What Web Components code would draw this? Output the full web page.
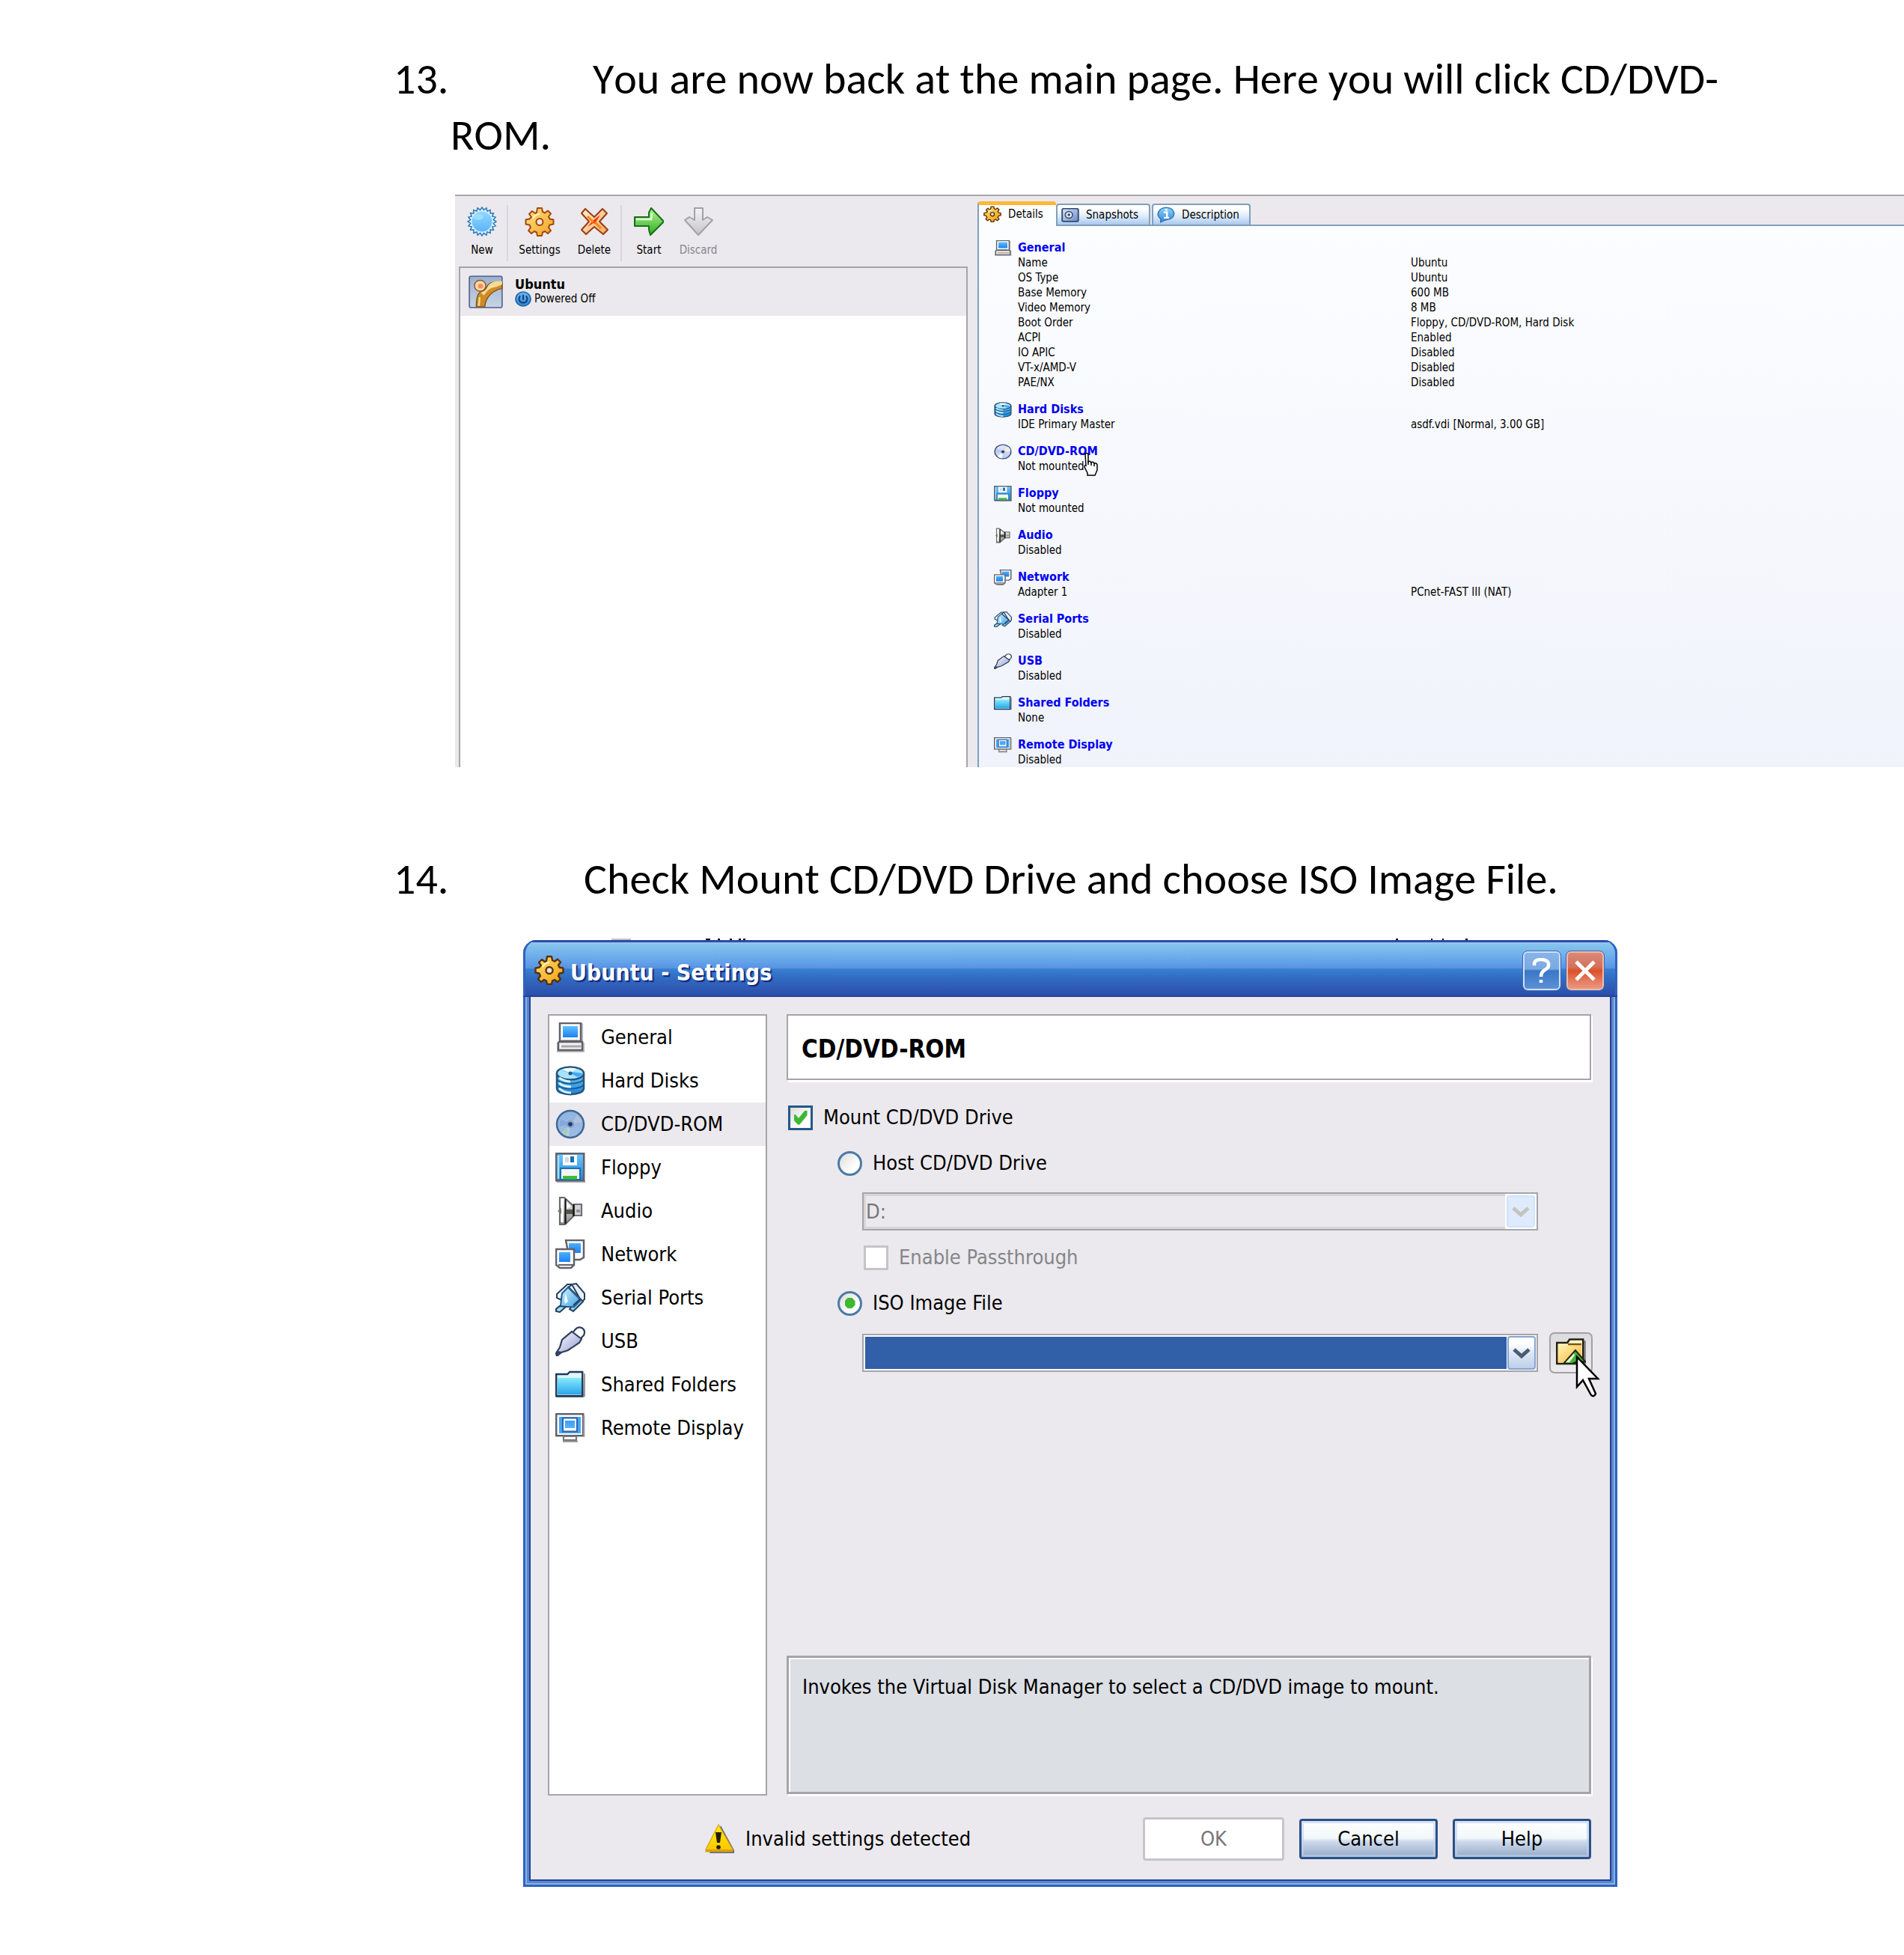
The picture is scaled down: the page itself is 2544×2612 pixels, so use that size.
<!DOCTYPE html>
<html lang="en">
<head>
<meta charset="utf-8">
<title>Installing Ubuntu in VirtualBox</title>
<style>
  body { margin: 0; background: #fff; color: #000; overflow-x: hidden; }
  main { display: flex; flex-direction: column; }
  vm-manager { margin: 42px 0 112px 608px; }
  settings-dialog { margin: 42px 383px 91px 699px; }
</style>
</head>
<body>
<main>
  <doc-step number="13." class="first" style="--lead:266px">You are now back at the main page. Here you will click CD/DVD-<wbr>ROM.</doc-step>
  <vm-manager></vm-manager>
  <doc-step number="14." style="--lead:254px">Check Mount CD/DVD Drive and choose ISO Image File.</doc-step>
  <settings-dialog></settings-dialog>
</main>

<script>
const UI = '"DejaVu Sans Condensed", "DejaVu Sans", sans-serif';

const gear = `
  <g stroke="#5a3010" stroke-width="2.4" stroke-linejoin="round">
   <path fill="url(#gg)" d="M17 2h6l1 5 3 1.500 4-3 4 4-3 4 1.500 3 5 1v6l-5 1-1.500 3.500 3 4-4 4-4-3-3 1.500-1 4.500h-6l-1-4.500-3-1.500-4 3-4-4 3-4-1.500-3.500-5-1v-6l5-1L9 14l-3-4 4-4 4 3 2-1z"/>
   <circle cx="20" cy="20.500" r="4.500" fill="#e9e4e0"/></g>
  <path d="M11 16q3-6 9-6" stroke="#fff2b0" stroke-width="2.500" fill="none"/>`;
const gearGrad = (a, b) => `<defs><linearGradient id="gg" x1="0" y1="0" x2="1" y2="1"><stop offset="0" stop-color="${a}"/><stop offset="1" stop-color="${b}"/></linearGradient></defs>`;
const lin = (id, a, b, dir = 'x2="0" y2="1"') => `<defs><linearGradient id="${id}" x1="0" y1="0" ${dir}><stop offset="0" stop-color="${a}"/><stop offset="1" stop-color="${b}"/></linearGradient></defs>`;
const starPts = (n, r1, r2, cx, cy) => Array.from({ length: n * 2 }, (_, i) => {
  const r = i % 2 ? r2 : r1, a = Math.PI * i / n - Math.PI / 2;
  return (cx + r * Math.cos(a)).toFixed(1) + ',' + (cy + r * Math.sin(a)).toFixed(1);
}).join(' ');

const ICONS = {
  fresh: lin('a', '#8fd8ff', '#5cb4fb') + `<polygon points="${starPts(20, 19, 15.500, 20, 20)}" fill="#d8f3ff" stroke="#2f78b8" stroke-width="1.500"/><circle cx="20" cy="20" r="13.500" fill="url(#a)"/><ellipse cx="15" cy="14" rx="7" ry="4" fill="#a9e2ff" opacity=".7"/>`,
  gear: gearGrad('#ffdf6a', '#f0a010') + gear,
  gearbig: gearGrad('#ffe48a', '#f0a020') + gear.replace('#5a3010', '#a8480c').replace('2.4', '2'),
  remove: lin('a', '#fff0d8', '#f7a860', 'x2="1" y2="1"') + `<path d="M8 3l12 11L31 3l6 6-10 11 11 11-6 6-12-10L9 37l-6-6 10-11L3 9z" fill="url(#a)" stroke="#9c3c10" stroke-width="2" stroke-linejoin="round"/><path d="M18 19l10-8-6 10 5 6-8-5-8 5z" fill="#f5330c"/><path d="M11 13l8 8M21 21l8 8" stroke="#f5880c" stroke-width="3"/>`,
  start: lin('a', '#b8f59a', '#2cae1c') + `<path d="M1 14h19V8l3-6 17 18-18 18-2-7v-5H1z" fill="url(#a)" stroke="#177017" stroke-width="2" stroke-linejoin="round"/><path d="M3 17h20l1-8" stroke="#e4ffd8" stroke-width="2.500" fill="none"/>`,
  discard: lin('a', '#f4f4f6', '#c4c4c8') + `<path d="M15 2h11v16l6-4 7 4-19 20L2 18l6-4 7 4z" fill="url(#a)" stroke="#a2a2a6" stroke-width="2" stroke-linejoin="round"/>`,
  general: lin('a', '#5cc0ff', '#1f80f5') + `<path d="M7 1h30v26h2v13H2V27h5z" fill="#b9b9bd"/><rect x="6" y="1" width="28" height="24" fill="#fff" stroke="#616168" stroke-width="2.500"/><rect x="10" y="5" width="20" height="15" fill="url(#a)"/><path d="M5 26h31v11H4V27z" fill="#f2f2f2" stroke="#616168" stroke-width="2.500"/><path d="M8 32h26" stroke="#a9a9ad" stroke-width="3"/><path d="M10 25h20" stroke="#616168" stroke-width="2.500"/>`,
  disks: lin('a', '#6ccffc', '#1a80d8') + `<path d="M2 10v20c0 11 36 11 36 0V10" fill="url(#a)" stroke="#2a5378" stroke-width="2.500"/><ellipse cx="20" cy="10" rx="18" ry="8.500" fill="#a8e4ff" stroke="#2a5378" stroke-width="2.500"/><path d="M8 6l12 4 10 5q6-2 6-5z" fill="#3fa8ff"/><path d="M9 5l11 5 8-6q-10-3-19 1z" fill="#e9faff"/><path d="M2 17c2 9 34 9 36 0M2 24c2 9 34 9 36 0" fill="none" stroke="#1d5c92" stroke-width="2"/><path d="M5 23q6 5 16 5M5 30q6 6 16 6M5 16q8 5 15 5" fill="none" stroke="#d4f4ff" stroke-width="3"/><circle cx="20" cy="10" r="2.500" fill="#2a5378"/>`,
  cd: lin('a', '#8fb4e0', '#9fbbe2') + `<circle cx="20" cy="20" r="18" fill="url(#a)" stroke="#3d6796" stroke-width="2.500"/><path d="M20 20L29 8q6 4 7 9z" fill="#b4bfdc"/><path d="M20 20L9 31q5 5 9 5z" fill="#b4cbe6"/><path d="M12 29l4-3 0 5-4 3z" fill="#93dc80"/><path d="M20 20L8 13q-3 5-3 10z" fill="#84a9da"/><circle cx="20" cy="20" r="5" fill="#7f9fc8"/><circle cx="20" cy="20" r="2.800" fill="#1e3e68"/>`,
  cdlight: lin('a', '#e2e9fb', '#bccbf0') + `<circle cx="20" cy="20" r="18" fill="url(#a)" stroke="#3c5378" stroke-width="2.500"/><path d="M20 20L31 7q6 5 6 11z" fill="#f4f0dc"/><path d="M20 20L8 32q5 5 10 5z" fill="#f8fafc"/><path d="M20 20L7 12q-4 6-3 12z" fill="#b9c9ee"/><circle cx="20" cy="20" r="5" fill="#a2b4dc"/><circle cx="20" cy="20" r="3" fill="#1c2c48"/>`,
  floppy: lin('a', '#6ec6fb', '#1e86d8') + `<path d="M0 37h40v3H2z" fill="#a9a9ad"/><rect x="1.200" y="1.200" width="37" height="36" fill="url(#a)" stroke="#616168" stroke-width="2.500"/><path d="M4 4v31" stroke="#9be0ff" stroke-width="2.500"/><rect x="10" y="3" width="19" height="14" fill="#fff"/><rect x="20" y="5" width="5" height="8" fill="#1870b0"/><rect x="13" y="6" width="5" height="7" fill="#d9d9dd"/><rect x="7" y="21" width="26" height="15" fill="#f4f4f2" stroke="#1870b0" stroke-width="2"/><rect x="10" y="31" width="19" height="4.500" fill="#3dbe32"/>`,
  audio: lin('a', '#f0f0f0', '#8a8a8a') + `<path d="M6 2h6l12 11v14L13 38H6z" fill="url(#a)" stroke="#6a6a6a" stroke-width="2.200"/><path d="M9 4v31" stroke="#fff" stroke-width="3.500"/><path d="M15 8l6 6-6 3z" fill="#fff"/><path d="M15 18h9v6h-9z" fill="#55524a"/><path d="M3 20l5-4v8z" fill="#77746c"/><path d="M25 11h10v15H25z" fill="#d4d4d6" stroke="#707074" stroke-width="2.200"/><path d="M28 18h5v4h-5z" fill="#94949a"/><path d="M13.500 4v33M24.500 11v16" stroke="#111" stroke-width="2.200"/>`,
  network: lin('a', '#48b0fb', '#1f80f5') + `<path d="M14 1h24v23l-5 3h-14z" fill="#fff" stroke="#616168" stroke-width="2.500"/><rect x="18" y="5" width="16" height="13" fill="url(#a)"/><path d="M1 13h24v21l-4 4H6l-5-4z" fill="#fff" stroke="#616168" stroke-width="2.500"/><rect x="5" y="17" width="15" height="13" fill="url(#a)"/><path d="M4 34h20M8 38h12" stroke="#616168" stroke-width="2"/>`,
  serial: lin('a', '#e4faff', '#2c98e4', 'x2="1" y2="1"') + `<path d="M16 2h6l-12 12-2 9-6-3v-5z" fill="#eef4fa" stroke="#24415e" stroke-width="2"/><path d="M22 2l6-1 11 13v8l-4 3z" fill="#e8eef4" stroke="#24415e" stroke-width="2"/><path d="M17 5l20 20-13 13-5-3 6-7z" fill="#8cd0f8" stroke="#24415e" stroke-width="2"/><path d="M17 6l17 17-9 9-13 0-8 6-3-3 6-5 2-16z" fill="url(#a)" stroke="#2a5c8c" stroke-width="2"/><path d="M1 35l5-4 8 1-8 7-5-1z" fill="#a4dcf8" stroke="#24415e" stroke-width="2"/><path d="M24 30l10-9" stroke="#24415e" stroke-width="2"/><path d="M14 14q-3 8-1 14l4-3z" fill="#f4fdff"/>`,
  usb: lin('a', '#fff', '#8c94d0', 'x2="1" y2="1"') + `<path d="M26 5q4-5 9-3 6 3 3 10l-5 5-10-8z" fill="#fff" stroke="#30405c" stroke-width="2.200"/><path d="M22 7l13 10-3 5-15 10-9 3-6 5-1-4 5-8 3-10z" fill="url(#a)" stroke="#30405c" stroke-width="2.200"/><path d="M1 39l2-6 6 1z" fill="#30405c"/>`,
  folder: lin('a', '#8cecff', '#2aa6e8') + `<path d="M38 4l2 2v30l-3 1z" fill="#9a9aa2"/><path d="M1.200 6h15l3-3h17v32H1.200z" fill="#e6f4ff" stroke="#1c3c58" stroke-width="2.400"/><path d="M3 10h32v23H3z" fill="url(#a)"/><path d="M3 10h32" stroke="#d4f8ff" stroke-width="2"/><path d="M1 35.500h36" stroke="#1c3c58" stroke-width="2.500"/>`,
  display: lin('a', '#3c9cf8', '#58b4ff') + `<rect x="1.200" y="1.200" width="36" height="29" fill="#fff" stroke="#616168" stroke-width="2.500"/><rect x="5" y="5" width="29" height="22" fill="#44a8fa"/><rect x="10" y="6.500" width="19" height="18" fill="#fff" stroke="#2c64a8" stroke-width="2"/><rect x="13" y="10" width="13" height="10" fill="url(#a)"/><path d="M11 31h17v5H11z" fill="#fff" stroke="#77777d" stroke-width="2.200"/><path d="M10 38h20" stroke="#9a9aa0" stroke-width="2"/><path d="M38.500 3v29" stroke="#a9a9ad" stroke-width="2"/>`,
  snapshot: lin('a', '#dce8fb', '#6c88c4', 'x2="1" y2="1"') + `<rect x="2" y="5" width="36" height="31" rx="3" fill="url(#a)" stroke="#30486c" stroke-width="3"/><circle cx="17" cy="20" r="8" fill="#eef3fc" stroke="#40587c" stroke-width="3"/><circle cx="17" cy="20" r="3" fill="#30486c"/>`,
  info: lin('a', '#8ed4fb', '#2c84dc') + `<path d="M8 38v-8Q1 24 2 17 5 3 20 2q16 1 18 14 0 14-16 16l-6 2z" fill="url(#a)" stroke="#3878b0" stroke-width="2.500"/><path d="M15 14h7v12M15 27h12M18 8h5" stroke="#fff" stroke-width="4" fill="none"/>`,
  power: lin('a', '#6cbcf4', '#2c80cc') + `<circle cx="20" cy="20" r="18" fill="url(#a)" stroke="#2464a4" stroke-width="3"/><path d="M13 12q-6 8 0 15 7 5 14 0 6-7 0-15M20 9v13" stroke="#0c3c7c" stroke-width="3.500" fill="none"/>`,
  vm: lin('a', '#9cb0cc', '#c8d4e4') + `<rect x="1" y="1" width="38" height="38" rx="2" fill="url(#a)" stroke="#606c98" stroke-width="1.600"/><path d="M39 8c-7-1-15 0-18 6-1 3-3 4-7 6-4 2-5 10-5 18h10c0-7 4-14 10-18 3-2 6-4 10-4z" fill="#d08c20" stroke="#7c5024" stroke-width="1.200"/><path d="M39 7c-8-1-14 1-17 7-1 3-3 5-8 7l4 3q5-8 10-9 6-1 11-4z" fill="#f4dc98"/><path d="M12 26l-1 11h2l1-10z" fill="#f4dc98"/><circle cx="13.500" cy="12.500" r="6.600" fill="#f8d8a0" stroke="#8c5c34" stroke-width="1.300"/><circle cx="14" cy="13" r="3" fill="#f49060"/>`,
  warn: lin('a', '#fff000', '#ffc400') + `<path d="M21 2l18 33v4H6z" fill="#5c6880"/><path d="M18 1L1 34v3h36v-3z" fill="url(#a)" stroke="#d89c20" stroke-width="1.200"/><path d="M1 35.500h36" stroke="#d4a018" stroke-width="3"/><path d="M14 11h8l-2 14h-4z" fill="#201c08"/><circle cx="18" cy="31" r="2.800" fill="#201c08"/>`,
  open: lin('a', '#fff4b0', '#f8b840', 'x2="1" y2="1"') + `<path d="M36 3h4v33h-4z" fill="#8c8c90"/><path d="M1.200 6h14l3-4.500h18V34H1.200z" fill="#fff8d0" stroke="#2a2010" stroke-width="2.500"/><path d="M3 9h31v23H3z" fill="url(#a)"/><path d="M16 8h18" stroke="#7c5810" stroke-width="2.500"/><path d="M26 16L10 34h12l8-4 10 2z" fill="#3cb83c" stroke="#2a2010" stroke-width="2"/><path d="M24 20L13 32h5l7-9z" fill="#e8f8d8"/>`
};

class BaseElement extends HTMLElement {
  constructor() {
    super();
    this.attachShadow({ mode: 'open' });
  }
  connectedCallback() {
    if (!this.shadowRoot.firstChild) this.shadowRoot.innerHTML = this.render();
  }
  get(name, fallback = '') { return this.getAttribute(name) ?? fallback; }
}

customElements.define('vm-icon', class extends BaseElement {
  render() {
    return `<style>:host{display:block;flex:none;width:40px;height:40px}svg{display:block;width:100%;height:100%}</style>
    <svg viewBox="0 0 40 40" preserveAspectRatio="none" aria-hidden="true">${ICONS[this.get('name')]}</svg>`;
  }
});

customElements.define('doc-step', class extends BaseElement {
  render() {
    return `<style>
      :host{display:block;padding:0 200px 0 602px;font:58px/75px Carlito, Lato, sans-serif;font-kerning:none;font-variant-ligatures:none}
      :host(.first){padding-top:68px}
      p{margin:0;text-indent:-76px}
      .n{display:inline-block;width:var(--lead);text-indent:0}
    </style><p><span class="n">${this.get('number')}</span><slot></slot></p>`;
  }
});

customElements.define('tool-button', class extends BaseElement {
  render() {
    return `<style>
      :host{display:block;flex:none}
      button{all:unset;box-sizing:border-box;display:flex;flex-direction:column;align-items:center;gap:8px;width:100%;font:15px/20px ${UI};white-space:nowrap}
      :host([disabled]) button{color:#85858a}
    </style><button ${this.hasAttribute('disabled') ? 'disabled' : ''}><vm-icon name="${this.get('icon')}"></vm-icon><slot></slot></button>`;
  }
});

customElements.define('vm-tab', class extends BaseElement {
  render() {
    return `<style>
      :host{display:block}
      button{all:unset;box-sizing:border-box;display:flex;align-items:center;gap:9px;height:28px;width:100%;padding:0 0 1px 5px;
        border:2px solid #7f9fbf;border-bottom:0;border-radius:4px 4px 0 0;
        background:linear-gradient(#fff 20%,#dce9f9 60%,#a9c9ef);font:15px/20px ${UI};white-space:nowrap}
      :host([selected]) button{height:33px;padding:0 0 5px 6px;border-top:5px solid #fdb834;border-right-width:0;background:#fcfdff}
      vm-icon{width:24px;height:22px}
    </style><button role="tab"><vm-icon name="${this.get('icon')}"></vm-icon><slot></slot></button>`;
  }
});

customElements.define('detail-section', class extends BaseElement {
  render() {
    const rows = this.get('rows').split('|').map(r => r.split('='));
    return `<style>
      :host{display:grid;grid-template-columns:32px 1fr;font:15px/20px ${UI}}
      vm-icon{width:24px;height:21px}
      h3{margin:0;font:bold 16px/20px ${UI}}
      h3 a{position:relative;color:#0000f0;text-decoration:none}
      table{border-collapse:collapse;width:100%;table-layout:fixed}
      th,td{padding:0;height:20px;text-align:left;font-weight:400;white-space:nowrap}
      th{width:525px}
      ::slotted(svg){position:absolute;left:87px;top:11px}
    </style>
    <vm-icon name="${this.get('icon')}"></vm-icon>
    <div><h3><a href="#">${this.get('title')}<slot></slot></a></h3>
    <table>${rows.map(([k, v]) => `<tr><th scope="row">${k}</th><td>${v || ''}</td></tr>`).join('')}</table></div>`;
  }
});

customElements.define('vm-manager', class extends BaseElement {
  render() {
    return `<style>
      :host{display:grid;grid-template-columns:698px minmax(0,1fr);height:765px;overflow:hidden;background:#ebe9ed;
        border-top:2px solid #a7a6aa;box-sizing:border-box;font:15px/20px ${UI}}
      .left{display:flex;flex-direction:column;padding:12px 13px 0 5px}
      .bar{display:flex;height:82px}
      .bar i{flex:none;width:2px;height:75px;margin:0 2px;background:#d8d6da}
      .bar tool-button{margin-top:2px}
      .w62{width:62px}.w80{width:80px}.w66{width:66px}.w68{width:68px}.w64{width:64px}
      ul{flex:1;margin:0;padding:0;list-style:none;background:#fff;border:2px solid #a5a5a9;border-bottom:0}
      li{display:flex;align-items:center;gap:16px;height:64px;padding-left:11px;background:#ebe9ed}
      li>vm-icon{width:46px;height:44px}
      b{display:block;font:bold 18px/18px ${UI}}
      .st{display:flex;align-items:center;gap:4px;height:20px}
      .st vm-icon{width:22px;height:21px}
      .right{display:flex;flex-direction:column;padding-top:7px}
      .tabs{display:flex;align-items:flex-end;height:31px;z-index:1}
      .t1{width:105px;margin-bottom:-2px}.t2{width:126px;margin-right:2px}.t3{width:132px}
      .page{flex:1;border:solid #7f9fbf;border-width:2px 0 0 2px;background:linear-gradient(#fcfdff,#f8f9fe 40%,#f0f3fb);padding:19px 0 0 20px;display:flex;flex-direction:column;gap:16px}
    </style>
    <div class="left">
      <div class="bar" role="toolbar">
        <tool-button class="w62" icon="fresh">New</tool-button><i></i>
        <tool-button class="w80" icon="gearbig">Settings</tool-button>
        <tool-button class="w66" icon="remove">Delete</tool-button><i></i>
        <tool-button class="w68" icon="start">Start</tool-button>
        <tool-button class="w64" icon="discard" disabled>Discard</tool-button>
      </div>
      <ul><li><vm-icon name="vm"></vm-icon><div><b>Ubuntu</b><span class="st"><vm-icon name="power"></vm-icon>Powered Off</span></div></li></ul>
    </div>
    <div class="right">
      <div class="tabs" role="tablist">
        <vm-tab class="t1" icon="gear" selected>Details</vm-tab>
        <vm-tab class="t2" icon="snapshot">Snapshots</vm-tab>
        <vm-tab class="t3" icon="info">Description</vm-tab>
      </div>
      <div class="page">
        <detail-section icon="general" title="General" rows="Name=Ubuntu|OS Type=Ubuntu|Base Memory=600 MB|Video Memory=8 MB|Boot Order=Floppy, CD/DVD-ROM, Hard Disk|ACPI=Enabled|IO APIC=Disabled|VT-x/AMD-V=Disabled|PAE/NX=Disabled"></detail-section>
        <detail-section icon="disks" title="Hard Disks" rows="IDE Primary Master=asdf.vdi [Normal, 3.00 GB]"></detail-section>
        <detail-section icon="cdlight" title="CD/DVD-ROM" rows="Not mounted"><svg width="22" height="32" viewBox="0 0 22 32"><path d="M3 3q2-3 4 0v10q2-2 4 1 2-2 4 1 3-1 4 2v7l-3 7H6v-3L2 20q0-3 2-2z" fill="#fff" stroke="#000" stroke-width="1.500"/><path d="M7 12v5M11 13v5M15 15v4" stroke="#000" stroke-width="1.500"/></svg></detail-section>
        <detail-section icon="floppy" title="Floppy" rows="Not mounted"></detail-section>
        <detail-section icon="audio" title="Audio" rows="Disabled"></detail-section>
        <detail-section icon="network" title="Network" rows="Adapter 1=PCnet-FAST III (NAT)"></detail-section>
        <detail-section icon="serial" title="Serial Ports" rows="Disabled"></detail-section>
        <detail-section icon="usb" title="USB" rows="Disabled"></detail-section>
        <detail-section icon="folder" title="Shared Folders" rows="None"></detail-section>
        <detail-section icon="display" title="Remote Display" rows="Disabled"></detail-section>
      </div>
    </div>`;
  }
});

customElements.define('nav-item', class extends BaseElement {
  render() {
    return `<style>
      :host{display:block}
      a{display:flex;align-items:center;gap:21px;height:58px;padding-left:8px;color:#000;text-decoration:none;white-space:nowrap}
      :host([selected]) a{background:#ebe9ed}
    </style><a href="#"><vm-icon name="${this.get('icon')}"></vm-icon><slot></slot></a>`;
  }
});

customElements.define('combo-box', class extends BaseElement {
  render() {
    const off = this.hasAttribute('disabled');
    return `<style>
      :host{display:flex;box-sizing:border-box;height:51px;border:2px solid #a5a5a9;background:#fff}
      select{appearance:none;flex:1;min-width:0;margin:2px 0 2px 2px;padding:0 2px;border:0;border-radius:0;background:#315fa8;color:#fff;font:27px/32px ${UI};opacity:1}
      :host([disabled]) select{margin:0;border:solid #d6d5da;border-width:3px 0 3px 3px;padding:0;background:#ebe9ed;color:#77767a}
      span{display:flex;align-items:center;justify-content:center;box-sizing:border-box;width:38px;margin:1px 1px 1px 1px;border:2px solid #86a4d0;border-radius:4px;background:linear-gradient(#fff 20%,#dfe8f8 50%,#bccfe8)}
      :host([disabled]) span{border-color:#cfe4fc;background:#deebfd;margin:2px}
      svg{display:block}
    </style><select aria-label="${this.get('label')}" ${off ? 'disabled' : ''}><option>${this.get('value')}</option></select>
    <span><svg width="24" height="16" viewBox="0 0 24 16"><path d="M2 3l10 9L22 3" fill="none" stroke="${off ? '#c5c4bc' : '#4d5c70'}" stroke-width="5"/></svg></span>`;
  }
});

customElements.define('push-button', class extends BaseElement {
  render() {
    return `<style>
      :host{display:block;width:185px}
      button{box-sizing:border-box;width:100%;height:54px;padding:0;border:3px solid #2b5087;border-radius:4px;color:#000;
        background:linear-gradient(#fff,#f2f8f9 48%,#cfdbee 56%,#a6b7d0 88%,#8fa9d0);box-shadow:inset 0 0 0 3px rgba(190,208,238,.6);font:27px/32px ${UI}}
      :host([disabled]) button{border-color:#c5c5c9;background:#fff;box-shadow:none;color:#77767a;height:58px}
      :host([disabled]){width:189px}
    </style><button ${this.hasAttribute('disabled') ? 'disabled' : ''}><slot></slot></button>`;
  }
});

customElements.define('settings-dialog', class extends BaseElement {
  render() {
    const nav = [['general', 'General'], ['disks', 'Hard Disks'], ['cd', 'CD/DVD-ROM'], ['floppy', 'Floppy'], ['audio', 'Audio'], ['network', 'Network'], ['serial', 'Serial Ports'], ['usb', 'USB'], ['folder', 'Shared Folders'], ['display', 'Remote Display']];
    return `<style>
      :host{display:block;font:27px/32px ${UI}}
      *{box-sizing:border-box}
      .sliver{display:block;width:100%;height:2px}
      .win{display:flex;flex-direction:column;padding:0 10px 10px;border-radius:18px 18px 0 0;background:#ebe9ed;
        box-shadow:inset 0 0 0 3px #2f62c0,inset 0 0 0 5px #85b2e6,inset 0 0 0 8px #5b87c9,inset 0 0 0 10px #24419a}
      header{display:flex;align-items:center;height:76px;margin:0 -10px;padding:0 18px 0 15px;border-radius:18px 18px 0 0;border-bottom:2px solid #24419a;
        background:linear-gradient(#284ea8 0 3px,#98c2f2 3px 5px,#86c6ec 5px,#62a0ea 30px,#5892e0 38px,#3a80d4 38px,#3270c4 48px,#2f5cb8 62px,#2a4faa);
        box-shadow:inset 3px 0 #2f62c0,inset -3px 0 #2f62c0}
      h2{flex:1;margin:0 0 0 8px;padding-top:14px;font:bold 30px/40px ${UI};color:#fff;text-shadow:2px 2px 1px #10237c}
      header>vm-icon{margin-top:6px}
      .cap{width:50px;height:52px;margin:8px 0 0 8px;padding:0;border:2px solid #cfe0f6;outline:1px solid #3c68b8;border-radius:6px;background:linear-gradient(#88b4e8,#7aaae2 45%,#3878c8 50%,#5c90d4);display:flex;align-items:center;justify-content:center}
      .cap.x{border-color:#f4b8a8;background:linear-gradient(#d88a78,#d4705c 40%,#dc5024 50%,#e4785c 75%,#e89880)}
      .cap svg{display:block}
      .body{display:grid;grid-template-columns:293px minmax(0,1fr);column-gap:26px;padding:23px 25px 0 23px}
      nav{border:2px solid #a5a5a9;background:#fff;height:1044px}
      .pane{display:flex;flex-direction:column;height:1042px}
      h1{margin:0;height:88px;padding:0 18px;border:2px solid #a5a5a9;background:#fff;box-shadow:2px 3px #fff;font:bold 33px/90px ${UI}}
      label{display:flex;align-items:center;gap:14px;height:34px}
      .mount{margin:33px 0 0 2px}
      .group{display:flex;flex-direction:column;margin:27px 71px 0 68px}
      .in{margin-left:33px}
      .off{color:#85858a;padding-left:2px}
      input{appearance:none;flex:none;width:33px;height:33px;margin:0;border:3px solid #22588c;background:linear-gradient(135deg,#dcdcd8,#fff 70%);display:grid;place-items:center}
      input[type=radio]{border-radius:50%;border-color:#4a7aa8}
      input:disabled{border-color:#c5c5c9;background:#fff}
      input[type=checkbox]:checked::after{content:"";width:18px;height:19px;background:#3cb832;clip-path:polygon(0 30%,14% 30%,36% 55%,84% 0,100% 0,100% 34%,44% 100%,30% 100%,0 68%)}
      input[type=radio]:checked::after{content:"";width:14px;height:14px;background:#3cb832;clip-path:polygon(30% 0,70% 0,100% 30%,100% 70%,70% 100%,30% 100%,0 70%,0 30%)}
      .host{margin:22px 0 19px 33px}
      .iso{margin:27px 0 22px}
      .row{display:flex;align-items:center;gap:15px;margin-right:-73px}
      .row combo-box{flex:1}
      .open{position:relative;width:58px;height:55px;padding:0;border:2px solid #a2a2a6;border-radius:7px;background:linear-gradient(#dcdce0,#ecebee);display:flex;align-items:center;justify-content:center}
      .ptr{position:absolute;left:33px;top:28px}
      .info{margin-top:auto;height:185px;padding:23px 18px;border:3px solid #a5a5a9;background:#dcdfe4;box-shadow:2px 3px #fff,inset 2px 2px #fff}
      footer{display:flex;align-items:center;justify-content:flex-end;gap:20px;height:60px;margin:28px 25px 24px 23px}
      .warn{display:flex;align-items:center;gap:14px;margin:0 auto 0 210px}
    </style>
    <svg class="sliver" viewBox="0 0 1462 2" preserveAspectRatio="none" aria-hidden="true"><path d="M118 1h26" stroke="#c0c0c4" stroke-width="2"/><path d="M244 1h6M260 1h3M276 1h3M288 1h3M294 1h3M1166 1h3M1213 1h2M1228 1h2M1259 1h3" stroke="#000" stroke-width="2"/></svg>
    <section class="win" aria-label="Ubuntu - Settings">
      <header><vm-icon name="gear"></vm-icon><h2>Ubuntu - Settings</h2>
        <button class="cap" aria-label="What's this"><svg width="26" height="34" viewBox="0 0 26 34"><path d="M3 10V7q1-5 9-5t10 5q1 6-5 9-5 3-5 9M12 29v4" fill="none" stroke="#fff" stroke-width="4.500"/></svg></button>
        <button class="cap x" aria-label="Close"><svg width="28" height="28" viewBox="0 0 28 28"><path d="M2 2l24 24M26 2L2 26" stroke="#fff" stroke-width="5"/></svg></button>
      </header>
      <div class="body">
        <nav>${nav.map(([i, t]) => `<nav-item icon="${i}" ${i === 'cd' ? 'selected' : ''}>${t}</nav-item>`).join('')}</nav>
        <div class="pane">
          <h1>CD/DVD-ROM</h1>
          <label class="mount"><input type="checkbox" checked>Mount CD/DVD Drive</label>
          <div class="group">
            <label><input type="radio" name="src">Host CD/DVD Drive</label>
            <combo-box class="host" disabled label="Host drive" value="D:"></combo-box>
            <label class="in off"><input type="checkbox" disabled>Enable Passthrough</label>
            <label class="iso"><input type="radio" name="src" checked>ISO Image File</label>
            <div class="row in"><combo-box label="ISO image" value=""></combo-box>
              <button class="open" aria-label="Open Virtual Disk Manager"><vm-icon name="open"></vm-icon><svg class="ptr" width="33" height="58" viewBox="0 0 33 58"><path d="M2 3v40l8-9 11 20q4 3 6-2l-9-20h12z" fill="#fff" stroke="#000" stroke-width="2.500"/></svg></button></div>
          </div>
          <div class="info">Invokes the Virtual Disk Manager to select a CD/DVD image to mount.</div>
        </div>
      </div>
      <footer><span class="warn"><vm-icon name="warn"></vm-icon>Invalid settings detected</span>
        <push-button disabled>OK</push-button><push-button>Cancel</push-button><push-button>Help</push-button></footer>
    </section>`;
  }
});
</script>
</body>
</html>
